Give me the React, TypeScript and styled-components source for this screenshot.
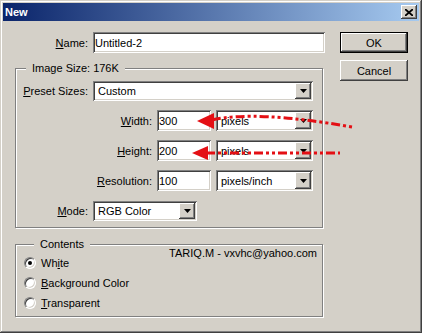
import React from "react";
import styled, { createGlobalStyle } from "styled-components";

const GlobalStyle = createGlobalStyle`
  html, body {
    margin: 0;
    padding: 0;
    background: #d4d0c8;
  }
  body {
    font-family: "Liberation Sans", Arial, sans-serif;
    font-size: 11px;
    color: #000;
  }
`;

const raised = `
  box-shadow: inset -1px -1px 0 #404040, inset 1px 1px 0 #fff,
    inset -2px -2px 0 #808080, inset 2px 2px 0 #d4d0c8;
`;

const sunken = `
  box-shadow: inset 1px 1px 0 #808080, inset -1px -1px 0 #fff,
    inset 2px 2px 0 #404040, inset -2px -2px 0 #d4d0c8;
`;

const Window = styled.div`
  position: relative;
  width: 422px;
  height: 333px;
  box-sizing: border-box;
  padding: 3px;
  background: #d4d0c8;
  box-shadow: inset -1px -1px 0 #404040, inset 1px 1px 0 #d4d0c8,
    inset -2px -2px 0 #808080, inset 2px 2px 0 #fff;
  display: flex;
  flex-direction: column;
  overflow: hidden;
`;

const TitleBar = styled.div`
  height: 18px;
  display: flex;
  align-items: center;
  justify-content: space-between;
  padding: 0 2px;
  background: linear-gradient(to right, #0a246a, #a6caf0);
`;

const Title = styled.span`
  color: #fff;
  font-weight: bold;
  font-size: 11px;
  font-family: "Liberation Sans", Arial, sans-serif;
`;

const CloseButton = styled.div`
  width: 16px;
  height: 14px;
  background: #d4d0c8;
  display: flex;
  align-items: center;
  justify-content: center;
  ${raised}
`;

const Body = styled.div`
  display: flex;
  gap: 15px;
  padding: 11px 11px 0 12px;
`;

const Main = styled.div`
  width: 310px;
  display: flex;
  flex-direction: column;
`;

const Buttons = styled.div`
  width: 68px;
  display: flex;
  flex-direction: column;
  gap: 7px;
`;

const Button = styled.div`
  height: 21px;
  display: flex;
  align-items: center;
  justify-content: center;
  background: #d4d0c8;
  ${raised}
`;

const DefaultButton = styled(Button)`
  box-shadow: inset 0 0 0 1px #000, inset -2px -2px 0 #404040,
    inset 2px 2px 0 #fff, inset -3px -3px 0 #808080;
`;

const Row = styled.div`
  display: flex;
  align-items: center;
  gap: 5px;
  height: 21px;
`;

const Label = styled.span<{ $w: number }>`
  width: ${(p) => p.$w}px;
  flex-shrink: 0;
  text-align: right;
  white-space: nowrap;
`;

const TextBox = styled.div<{ $w: number }>`
  width: ${(p) => p.$w}px;
  height: 21px;
  box-sizing: border-box;
  padding: 0 2px;
  display: flex;
  align-items: center;
  background: #fff;
  ${sunken}
`;

const Select = styled.div<{ $w: number; $h?: number }>`
  width: ${(p) => p.$w}px;
  height: ${(p) => p.$h ?? 21}px;
  box-sizing: border-box;
  padding: 2px 2px 2px 5px;
  display: flex;
  align-items: center;
  justify-content: space-between;
  background: #fff;
  ${sunken}
`;

const DropButton = styled.div`
  width: 16px;
  align-self: stretch;
  display: flex;
  align-items: center;
  justify-content: center;
  background: #d4d0c8;
  ${raised}
`;

const Group = styled.fieldset<{ $gap: number }>`
  margin: 0;
  padding: 0;
  width: 308px;
  box-sizing: border-box;
  min-inline-size: 0;
  border: 1px solid #808080;
  box-shadow: inset 1px 1px 0 #fff, 1px 1px 0 #fff;
  display: flex;
  flex-direction: column;
  gap: ${(p) => p.$gap}px;
`;

const ImageGroup = styled(Group)`
  margin-top: 9px;
  padding: 5px 0 6px 0;
`;

const ContentsGroup = styled(Group)`
  margin-top: 10px;
  padding: 5px 0 6px 8px;
`;

const Legend = styled.legend`
  margin-left: 10px;
  padding: 0 6px;
  line-height: 13px;
  background: #d4d0c8;
`;

const RadioRow = styled.div`
  display: flex;
  align-items: center;
  gap: 5px;
  height: 14px;
`;

const Radio = styled.span<{ $checked?: boolean }>`
  width: 12px;
  height: 12px;
  border-radius: 50%;
  box-sizing: border-box;
  background: #fff;
  border: 1px solid;
  border-color: #808080 #fff #fff #808080;
  box-shadow: inset 1px 1px 0 #404040, inset -1px -1px 0 #d4d0c8;
  display: flex;
  align-items: center;
  justify-content: center;
  &::after {
    content: "";
    width: 4px;
    height: 4px;
    border-radius: 50%;
    background: ${(p) => (p.$checked ? "#000" : "transparent")};
  }
`;

const Note = styled.span`
  margin-left: auto;
  margin-right: 5px;
  align-self: flex-start;
  margin-top: -9px;
`;

const Arrows = styled.svg`
  position: absolute;
  left: 0;
  top: 0;
  pointer-events: none;
`;

const Caret = () => (
  <svg width="7" height="4" viewBox="0 0 7 4">
    <path d="M0 0h7L3.5 4z" fill="#000" />
  </svg>
);

const DropDown: React.FC<{ value: string; width: number; height?: number }> = ({ value, width, height }) => (
  <Select $w={width} $h={height}>
    <span>{value}</span>
    <DropButton>
      <Caret />
    </DropButton>
  </Select>
);

export default function App() {
  return (
    <>
      <GlobalStyle />
      <Window>
        <TitleBar>
          <Title>New</Title>
          <CloseButton>
            <svg width="8" height="7" viewBox="0 0 8 7">
              <path d="M0 0l8 7M8 0L0 7" stroke="#000" strokeWidth="1.8" />
            </svg>
          </CloseButton>
        </TitleBar>
        <Body>
          <Main>
            <Row>
              <Label $w={73}>
                <u>N</u>ame:
              </Label>
              <TextBox $w={232}>Untitled-2</TextBox>
            </Row>
            <ImageGroup $gap={9}>
              <Legend>Image Size: 176K</Legend>
              <Row>
                <Label $w={72}>
                  <u>P</u>reset Sizes:
                </Label>
                <DropDown value="Custom" width={220} height={20} />
              </Row>
              <Row>
                <Label $w={136}>
                  <u>W</u>idth:
                </Label>
                <TextBox $w={54}>300</TextBox>
                <DropDown value="pixels" width={97} />
              </Row>
              <Row>
                <Label $w={136}>
                  <u>H</u>eight:
                </Label>
                <TextBox $w={54}>200</TextBox>
                <DropDown value="pixels" width={97} />
              </Row>
              <Row>
                <Label $w={136}>
                  <u>R</u>esolution:
                </Label>
                <TextBox $w={54}>100</TextBox>
                <DropDown value="pixels/inch" width={97} />
              </Row>
              <Row>
                <Label $w={72}>
                  <u>M</u>ode:
                </Label>
                <DropDown value="RGB Color" width={104} height={20} />
              </Row>
            </ImageGroup>
            <ContentsGroup $gap={6}>
              <Legend>Contents</Legend>
              <RadioRow>
                <Radio $checked />
                <span>
                  Wh<u>i</u>te
                </span>
                <Note>TARIQ.M - vxvhc@yahoo.com</Note>
              </RadioRow>
              <RadioRow>
                <Radio />
                <span>
                  <u>B</u>ackground Color
                </span>
              </RadioRow>
              <RadioRow>
                <Radio />
                <span>
                  <u>T</u>ransparent
                </span>
              </RadioRow>
            </ContentsGroup>
          </Main>
          <Buttons>
            <DefaultButton>OK</DefaultButton>
            <Button>Cancel</Button>
          </Buttons>
        </Body>
        <Arrows width="422" height="333" viewBox="0 0 422 333">
          <g stroke="#e40f14" strokeWidth="3" fill="none" strokeDasharray="9 3 3 3 3 3">
            <path d="M212 120Q255 110 352 127" />
            <path d="M206 153L340 153" />
          </g>
          <g fill="#e40f14">
            <path d="M197 121L214 113L214 129Z" />
            <path d="M192 153L208 146L208 160Z" />
          </g>
        </Arrows>
      </Window>
    </>
  );
}
